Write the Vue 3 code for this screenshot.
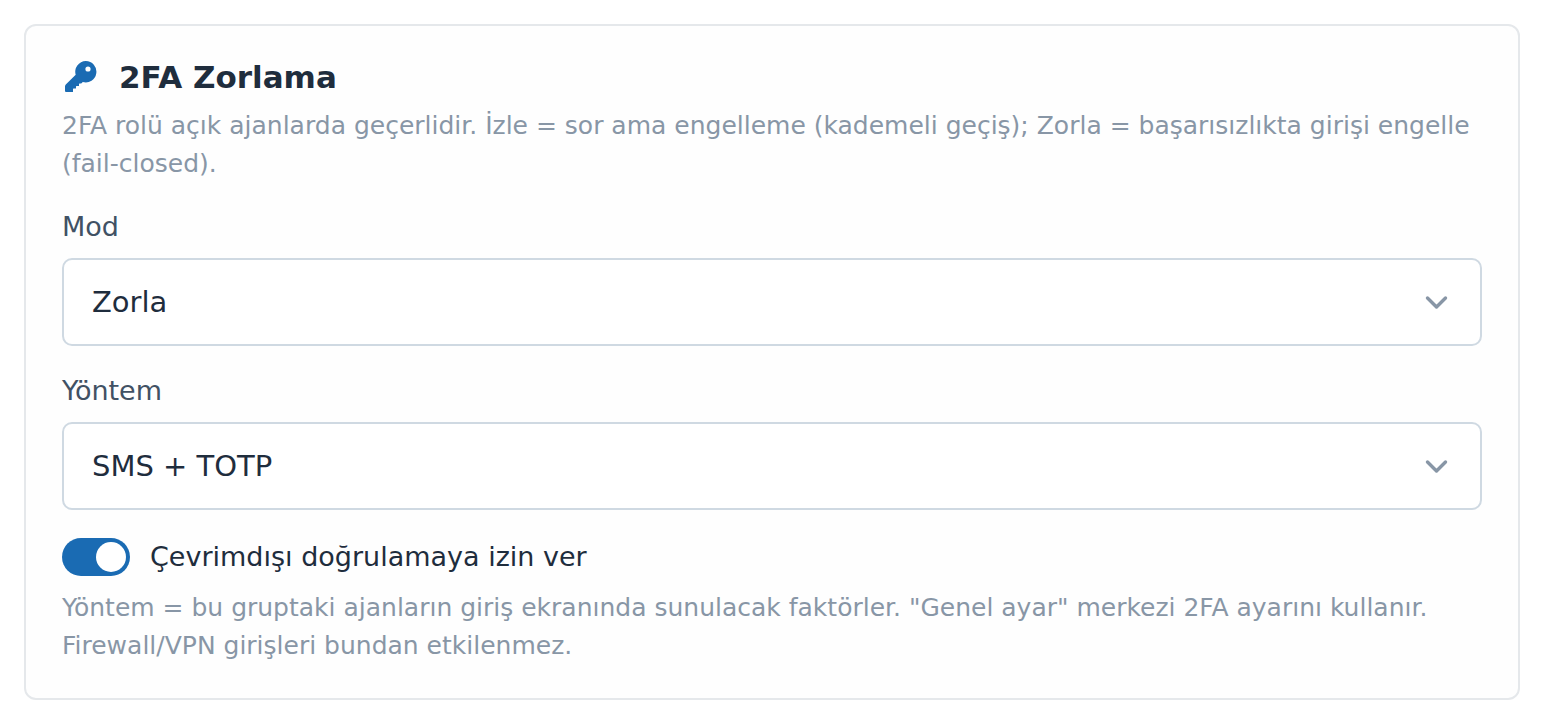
<script setup>
import { ref } from 'vue'

const mode = ref('enforce')
const method = ref('both')
const offline = ref(true)
</script>

<template>
  <main class="page">
    <section class="card">
      <h2 class="title">
        <svg class="key" viewBox="0 0 32 32" aria-hidden="true">
          <path d="M20.800 0a10.700 10.700 0 1 1-3 21L16.200 22.500h-1.700q-.5 0-.5.500v1.500q0 .5-.5.500h-2q-.5 0-.5.500v1.500q0 .5-.5.500h-2q-.5 0-.5.500v2.500q0 .5-.5.500H1Q0 31 0 30V25.500q0-1.200.8-2L10.700 13.800A10.700 10.700 0 0 1 20.800 0zM23 5.400a2.600 2.600 0 1 0 0 5.200a2.600 2.600 0 1 0 0-5.200z" />
        </svg>
        <span>2FA Zorlama</span>
      </h2>
      <p class="hint">2FA rolü açık ajanlarda geçerlidir. İzle = sor ama engelleme (kademeli geçiş); Zorla = başarısızlıkta girişi engelle (fail-closed).</p>

      <div class="fields">
        <div>
          <label class="label" for="mode">Mod</label>
          <div class="control">
            <select id="mode" v-model="mode" class="select">
              <option value="monitor">İzle</option>
              <option value="enforce">Zorla</option>
            </select>
            <svg class="chevron" viewBox="0 0 24 24" aria-hidden="true"><path d="M3.500 8l9 9l9-9" /></svg>
          </div>
        </div>

        <div>
          <label class="label" for="method">Yöntem</label>
          <div class="control">
            <select id="method" v-model="method" class="select">
              <option value="default">Genel ayar</option>
              <option value="both">SMS + TOTP</option>
            </select>
            <svg class="chevron" viewBox="0 0 24 24" aria-hidden="true"><path d="M3.500 8l9 9l9-9" /></svg>
          </div>
        </div>
      </div>

      <label class="toggle">
        <input v-model="offline" class="switch" type="checkbox" role="switch" />
        <span>Çevrimdışı doğrulamaya izin ver</span>
      </label>
      <p class="hint">Yöntem = bu gruptaki ajanların giriş ekranında sunulacak faktörler. "Genel ayar" merkezi 2FA ayarını kullanır. Firewall/VPN girişleri bundan etkilenmez.</p>
    </section>
  </main>
</template>

<style>
body {
  background: #fff;
}
</style>

<style scoped>
.page {
  padding: 24px;
  font-family: "DejaVu Sans", sans-serif;
  color: #1f2d3d;
}
.card {
  padding: 30px 36px 33px;
  border: 2px solid #e5e8eb;
  border-radius: 12px;
  background: #fefefe;
}
.title {
  display: flex;
  align-items: center;
  gap: 22px;
  margin: 0 0 9px;
  font-size: 31px;
  line-height: 42px;
  font-weight: 700;
}
.key {
  width: 32px;
  height: 32px;
  margin-left: 3px;
  fill: #1a6bb3;
}
.hint {
  margin: 0;
  font-size: 25px;
  line-height: 38px;
  color: #8896a6;
}
.fields {
  display: grid;
  gap: 24px;
  margin-top: 23px;
}
.label {
  display: block;
  margin-bottom: 10px;
  font-size: 27px;
  line-height: 42px;
  color: #415164;
}
.control {
  position: relative;
}
.select {
  appearance: none;
  display: block;
  box-sizing: border-box;
  width: 100%;
  height: 88px;
  padding: 0 80px 0 28px;
  border: 2px solid #cfd9e2;
  border-radius: 10px;
  background: #fff;
  color: inherit;
  font: inherit;
  font-size: 29px;
}
.chevron {
  position: absolute;
  top: 32px;
  right: 34px;
  width: 24px;
  height: 24px;
  fill: none;
  stroke: #8896a6;
  stroke-width: 3.4;
  stroke-linecap: round;
  stroke-linejoin: round;
  pointer-events: none;
}
.toggle {
  display: flex;
  align-items: center;
  gap: 20px;
  margin: 28px 0 13px;
  font-size: 27px;
  line-height: 38px;
}
.switch {
  appearance: none;
  display: flex;
  align-items: center;
  justify-content: flex-end;
  box-sizing: border-box;
  width: 68px;
  height: 38px;
  margin: 0;
  padding: 4px;
  border-radius: 19px;
  background: #1a6bb3;
}
.switch::before {
  content: "";
  width: 30px;
  height: 30px;
  border-radius: 50%;
  background: #fff;
}
.switch:not(:checked) {
  justify-content: flex-start;
  background: #cfd9e2;
}
</style>
